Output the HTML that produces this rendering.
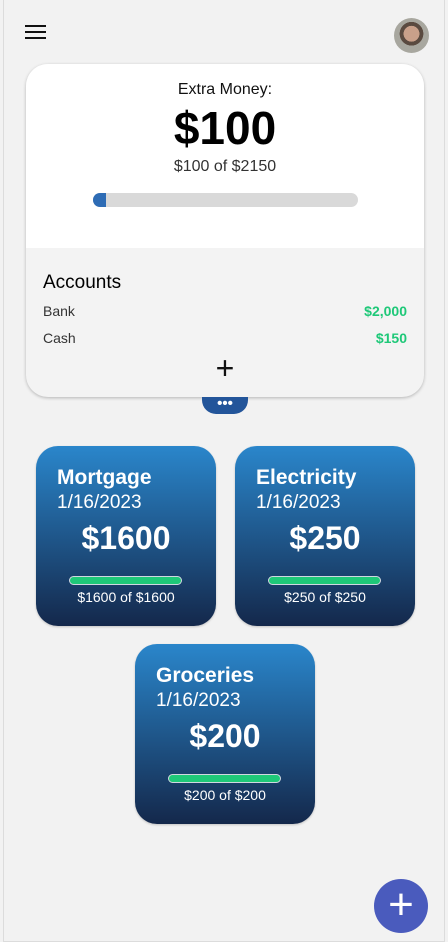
<!DOCTYPE html>
<html><head><style>
*{margin:0;padding:0;box-sizing:border-box}
body{width:448px;height:942px;background:#f2f2f2;font-family:"Liberation Sans",sans-serif;position:relative;overflow:hidden}
.frame{position:absolute;left:3px;top:0;width:442px;height:942px;border:1px solid #dcdcdc;border-top:none}
.ham{position:absolute;left:25px;top:25px;width:21px}
.ham div{height:2px;background:#111;margin-bottom:4px}
.av{position:absolute;left:394px;top:18px;width:35px;height:35px;border-radius:50%;background:radial-gradient(circle at 50% 45%,#c9a08a 0 30%,#5a4a40 31% 45%,#a8a79f 46%);}
.card{position:absolute;left:26px;top:64px;width:398px;height:333px;border-radius:22px;background:#f3f3f3;box-shadow:0 1px 3px rgba(0,0,0,.25);overflow:hidden}
.top{height:184px;background:#fff;text-align:center}
.t1{padding-top:17px;font-size:16px;color:#111}
.t2{font-size:46px;font-weight:bold;line-height:58px;color:#000}
.t3{font-size:16px;color:#333;line-height:20px}
.bar{margin:16px auto 0;width:265px;height:14px;border-radius:7px;background:#d9d9d9;overflow:hidden}
.bar div{width:13px;height:14px;background:#2e6cb5}
.acc{padding:24px 17px 0}
.acc h3{font-size:19px;font-weight:normal;color:#000;margin-bottom:9px}
.row{display:flex;justify-content:space-between;font-size:14px;color:#333;height:27px}
.row b{color:#1ec878}
.plus{text-align:center;font-size:32px;line-height:22px;font-weight:300;color:#111}
.pill{position:absolute;left:202px;top:397px;width:46px;height:17px;background:#23559a;border-radius:0 0 14px 14px;color:#fff;text-align:center;font-size:15px;line-height:13px;letter-spacing:0px;font-weight:bold}
.b{position:absolute;width:180px;height:180px;border-radius:22px;background:linear-gradient(#2a86cb,#14284b);color:#fff;box-shadow:0 1px 2px rgba(0,0,0,.2)}
.b .n{position:absolute;left:21px;top:20px;font-size:21px;font-weight:bold}
.b .d{position:absolute;left:21px;top:46px;font-size:19px}
.b .a{position:absolute;left:0;width:100%;top:74px;text-align:center;font-size:32px;font-weight:bold}
.b .g{position:absolute;left:33px;top:130px;width:113px;height:9px;border-radius:5px;background:#1ec878;border:1px solid #cfd8e0}
.b .s{position:absolute;left:0;width:100%;top:143px;text-align:center;font-size:14px}
.fab{position:absolute;left:374px;top:879px;width:54px;height:54px;border-radius:50%;background:#4a5bbd;color:#fff;text-align:center;font-size:44px;line-height:52px;font-weight:300}
</style></head><body>
<div class="frame"></div>
<div class="ham"><div></div><div></div><div></div></div>
<div class="av"></div>
<div class="card">
<div class="top"><div class="t1">Extra Money:</div><div class="t2">$100</div><div class="t3">$100 of $2150</div><div class="bar"><div></div></div></div>
<div class="acc"><h3>Accounts</h3>
<div class="row"><span>Bank</span><b>$2,000</b></div>
<div class="row"><span>Cash</span><b>$150</b></div>
<div class="plus">+</div></div>
</div>
<div class="pill">•••</div>
<div class="b" style="left:36px;top:446px"><div class="n">Mortgage</div><div class="d">1/16/2023</div><div class="a">$1600</div><div class="g"></div><div class="s">$1600 of $1600</div></div>
<div class="b" style="left:235px;top:446px"><div class="n">Electricity</div><div class="d">1/16/2023</div><div class="a">$250</div><div class="g"></div><div class="s">$250 of $250</div></div>
<div class="b" style="left:135px;top:644px"><div class="n">Groceries</div><div class="d">1/16/2023</div><div class="a">$200</div><div class="g"></div><div class="s">$200 of $200</div></div>
<div class="fab">+</div>
</body></html>
